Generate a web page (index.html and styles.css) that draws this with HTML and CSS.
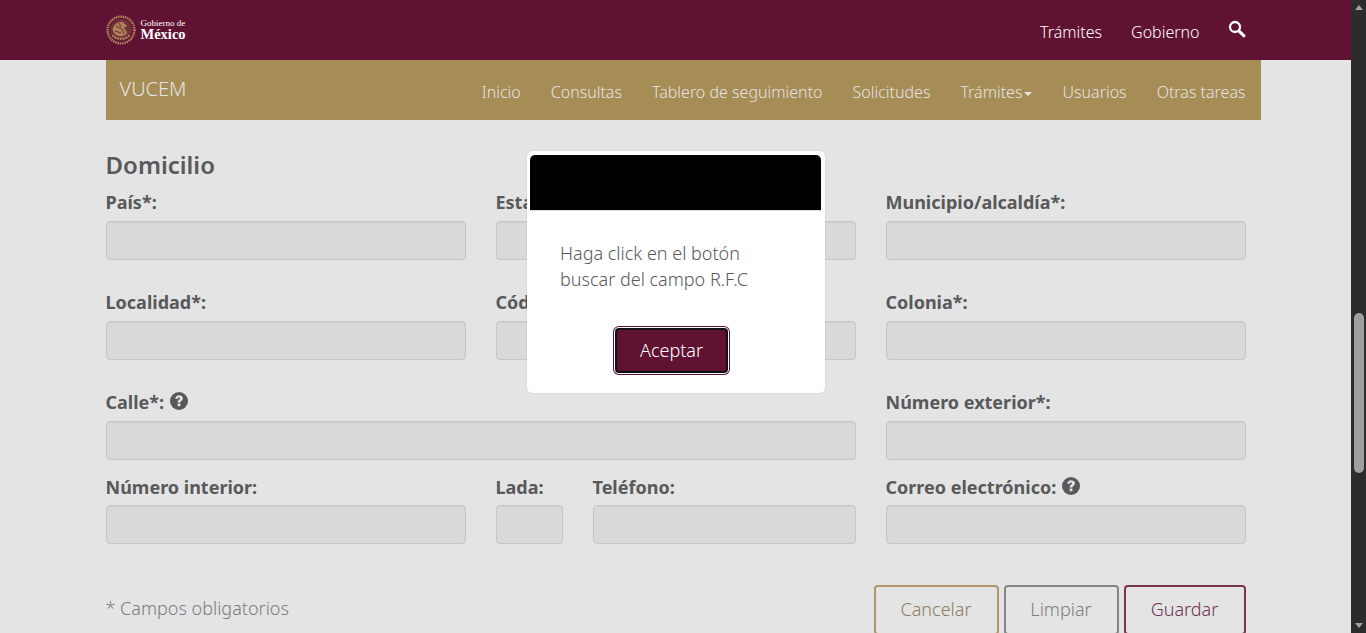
FILE: index.html
```html
<!DOCTYPE html>
<html lang="es">
<head>
<meta charset="utf-8">
<title>VUCEM</title>
<link rel="stylesheet" href="styles.css">
</head>
<body>
<div class="window">
  <div class="page">
    <header class="topbar">
      <div class="topbar-inner">
        <a class="logo">
          <svg class="seal" width="30" height="30" viewBox="0 0 30 30">
            <circle cx="15" cy="15" r="13.4" fill="none" stroke="#b08a5e" stroke-width="2.4" stroke-dasharray="1.5 .8"/>
            <circle cx="15" cy="15" r="11" fill="#74303a"/>
            <path d="M7 13c2-5 6-7 10-6 1 2 3 2 4 4-1 1-2 1-3 1 1 3 3 4 3 6-2 4-9 4-12 1-2-2-3-4-2-6z" fill="#ac8157"/>
            <path d="M6.500 20c3 5 14 5 17 0" fill="none" stroke="#b98f60" stroke-width="1.800" stroke-dasharray="2 .8"/>
            <path d="M10 11l6 3 2 5M9 16l6 2M13 8l2 4" fill="none" stroke="#6d2c34" stroke-width="1"/>
          </svg>
          <span class="logo-text"><span class="logo-small">Gobierno de</span><span class="logo-big">México</span></span>
        </a>
        <nav class="topnav">
          <a>Trámites</a>
          <a>Gobierno</a>
          <svg class="search" width="18" height="18" viewBox="0 0 18 18">
            <circle cx="7" cy="7" r="5" fill="none" stroke="#fff" stroke-width="2.300"/>
            <path d="M10.800 10.800l5.200 5" stroke="#fff" stroke-width="3" stroke-linecap="round"/>
          </svg>
        </nav>
      </div>
    </header>

    <div class="container">
      <div class="subnav">
        <span class="brand">VUCEM</span>
        <nav class="subnav-links">
          <a>Inicio</a>
          <a>Consultas</a>
          <a>Tablero de seguimiento</a>
          <a>Solicitudes</a>
          <a class="dropdown">Trámites<i class="caret"></i></a>
          <a>Usuarios</a>
          <a>Otras tareas</a>
        </nav>
      </div>

      <h2 class="section-title">Domicilio</h2>

      <form class="form">
        <div class="row row-a">
          <div class="field"><label>País*:</label><div class="input"></div></div>
          <div class="field"><label>Estado*:</label><div class="input"></div></div>
          <div class="field"><label>Municipio/alcaldía*:</label><div class="input"></div></div>
        </div>
        <div class="row row-a">
          <div class="field"><label>Localidad*:</label><div class="input"></div></div>
          <div class="field"><label>Código postal*:</label><div class="input"></div></div>
          <div class="field"><label>Colonia*:</label><div class="input"></div></div>
        </div>
        <div class="row row-b">
          <div class="field span-2"><label>Calle*: <svg class="help" viewBox="0 0 18 18"><circle cx="9" cy="9" r="9" fill="#58595b"/><path d="M5.300 6.800C5.500 4.400 7 3.200 9.100 3.200c2.300 0 3.800 1.300 3.800 3.100 0 2.500-2.500 2.600-2.500 4.200H7.700c0-2.900 2.300-2.900 2.300-4 0-.5-.4-.9-1-.9s-1.100.4-1.200 1.200z" fill="#e4e4e4"/><rect x="7.700" y="11.500" width="2.700" height="2.700" fill="#e4e4e4"/></svg></label><div class="input"></div></div>
          <div class="field"><label>Número exterior*:</label><div class="input"></div></div>
        </div>
        <div class="row row-c">
          <div class="field"><label>Número interior:</label><div class="input"></div></div>
          <div class="phone">
            <div class="field"><label>Lada:</label><div class="input"></div></div>
            <div class="field"><label>Teléfono:</label><div class="input"></div></div>
          </div>
          <div class="field"><label>Correo electrónico: <svg class="help" viewBox="0 0 18 18"><circle cx="9" cy="9" r="9" fill="#58595b"/><path d="M5.300 6.800C5.500 4.400 7 3.200 9.100 3.200c2.300 0 3.800 1.300 3.800 3.100 0 2.500-2.500 2.600-2.500 4.200H7.700c0-2.900 2.300-2.900 2.300-4 0-.5-.4-.9-1-.9s-1.100.4-1.200 1.200z" fill="#e4e4e4"/><rect x="7.700" y="11.500" width="2.700" height="2.700" fill="#e4e4e4"/></svg></label><div class="input"></div></div>
        </div>
        <div class="actions">
          <span class="required">* Campos obligatorios</span>
          <div class="buttons">
            <a class="btn btn-cancel">Cancelar</a>
            <a class="btn btn-clear">Limpiar</a>
            <a class="btn btn-save">Guardar</a>
          </div>
        </div>
      </form>
    </div>
  </div>

  <div class="scrollbar">
    <i class="arrow arrow-up"></i>
    <div class="track"><div class="thumb"></div></div>
    <i class="arrow arrow-down"></i>
  </div>

  <div class="modal">
    <div class="modal-head"></div>
    <p class="modal-text">Haga click en el botón buscar del campo R.F.C</p>
    <div class="modal-foot"><button class="btn-accept" type="button">Aceptar</button></div>
  </div>
</div>
</body>
</html>
```

FILE: styles.css
```css
* { box-sizing: border-box; }
html, body { margin: 0; height: 100%; overflow: hidden; }
body { font-family: "Noto Sans", sans-serif; color: #58595b; background: #e4e4e4; }

.window { position: relative; display: flex; height: 633px; overflow: hidden; }
.page { flex: 1; min-width: 0; height: 633px; overflow: hidden; }

.topbar { height: 60px; background: #5f1232; }
.topbar-inner { width: 1140px; margin: 0 auto; height: 60px; display: flex; align-items: center; justify-content: space-between; }
.logo { display: flex; align-items: center; gap: 5px; margin-top: -1px; }
.seal { display: block; }
.logo-text { display: flex; flex-direction: column; font-family: "Liberation Serif", serif; color: #fff; }
.logo-small { font-size: 9px; line-height: 9px; white-space: nowrap; }
.logo-big { font-size: 14.5px; line-height: 13px; font-weight: 700; }
.topnav { display: flex; align-items: center; gap: 29px; font-size: 16px; font-weight: 300; color: #fff; padding-top: 3px; }
.search { margin: -6px 0 0 -1px; }

.container { width: 1140px; margin: 0 auto; }
.subnav { width: 1155px; height: 60px; background: #a68c55; display: flex; justify-content: space-between; color: #e4e4e4; padding: 0 15px 0 14px; }
.brand { font-size: 20px; line-height: 58px; font-weight: 300; }
.subnav-links { display: flex; gap: 30px; font-size: 16px; line-height: 64px; font-weight: 300; }
.caret { display: inline-block; margin-left: 2px; vertical-align: middle; border-top: 4px solid #e4e4e4; border-left: 4px solid transparent; border-right: 4px solid transparent; }

.section-title { margin: 27px 0 0; font-size: 24px; line-height: 36px; font-weight: 600; color: #58595b; }

.form { padding-top: 7px; }
.row { display: grid; grid-template-columns: repeat(3, 360px); column-gap: 30px; }
.row-a { height: 100px; }
.row-b, .row-c { height: 85px; }
.span-2 { grid-column: span 2; }
.field label { display: block; height: 31px; font-size: 18px; line-height: 24px; font-weight: 700; white-space: nowrap; }
.row-c .field label { height: 30px; }
.input { height: 39px; background: #d9d9d9; border: 1px solid #c6c6c6; border-radius: 4px; box-shadow: inset 0 1px 1px rgba(0,0,0,.04); }
.help { width: 18px; height: 18px; vertical-align: -1px; margin-left: 1px; }

.phone { display: grid; grid-template-columns: 67px 263px; column-gap: 30px; }

.actions { display: flex; justify-content: space-between; margin-top: 25px; }
.required { font-size: 18px; line-height: 24px; font-weight: 300; color: #7d7d7d; margin-top: 11px; }
.buttons { display: flex; gap: 5px; }
.btn { display: block; height: 50px; border: 2px solid; border-radius: 4px; font-size: 18px; line-height: 44px; text-align: center; font-weight: 300; }
.btn-cancel { width: 125px; border-color: #b3946b; color: #8c7c64; }
.btn-clear { width: 115px; border-color: #858585; color: #7d7d7d; }
.btn-save { width: 122px; border-color: #7b3352; color: #6e3350; }

.scrollbar { width: 15px; height: 633px; background: #2c2c2c; display: flex; flex-direction: column; align-items: center; }
.arrow { display: block; width: 0; height: 0; border-left: 4.5px solid transparent; border-right: 4.5px solid transparent; }
.arrow-up { margin-top: 5px; border-bottom: 5px solid #a3a3a3; }
.arrow-down { margin-bottom: 5px; border-top: 5px solid #a3a3a3; }
.track { flex: 1; width: 100%; }
.thumb { width: 10px; height: 160px; margin: 303px auto 0; background: #9f9f9f; border-radius: 5px; }

.modal { position: absolute; left: 527px; top: 151px; width: 298px; height: 242px; background: #fff; border-radius: 5px; padding: 4px 4px 0 3px; box-shadow: 0 0 2px rgba(0,0,0,.12); }
.modal-head { height: 55px; background: #000; border-radius: 5px 5px 0 0; box-shadow: 0 1px 0 #ddd; }
.modal-text { margin: 30px 0 0; padding: 0 60px 0 30px; font-size: 18px; line-height: 26px; font-weight: 300; color: #58595b; }
.modal-foot { display: flex; justify-content: center; margin-top: 36px; padding-right: 8px; }
.btn-accept { width: 113px; height: 45px; background: #5f1232; color: #fff; font: 300 18px/1 "Noto Sans", sans-serif; border: 2px solid #111; border-radius: 4px; box-shadow: 0 0 0 1px #fff, 0 0 0 2px #5f1232; padding: 0 0 2px; }
```
